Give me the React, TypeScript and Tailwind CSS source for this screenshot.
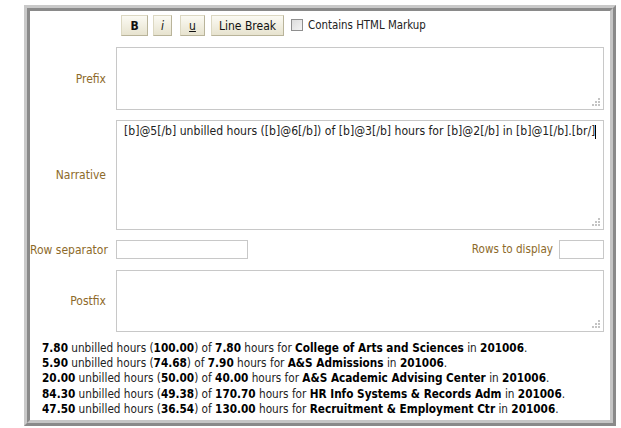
import React from "react";

const font = "font-['DejaVu_Sans_Condensed','DejaVu_Sans',sans-serif]";

const rows = [
  { a: "7.80", b: "100.00", c: "7.80", org: "College of Arts and Sciences" },
  { a: "5.90", b: "74.68", c: "7.90", org: "A&S Admissions" },
  { a: "20.00", b: "50.00", c: "40.00", org: "A&S Academic Advising Center" },
  { a: "84.30", b: "49.38", c: "170.70", org: "HR Info Systems & Records Adm" },
  { a: "47.50", b: "36.54", c: "130.00", org: "Recruitment & Employment Ctr" },
];

function Grip() {
  return (
    <svg className="absolute right-[3px] bottom-[3px]" width="9" height="9" viewBox="0 0 9 9">
      <g fill="#c4c4c4">
        <rect x="7" y="1" width="2" height="2" />
        <rect x="4" y="4" width="2" height="2" />
        <rect x="7" y="4" width="2" height="2" />
        <rect x="1" y="7" width="2" height="2" />
        <rect x="4" y="7" width="2" height="2" />
        <rect x="7" y="7" width="2" height="2" />
      </g>
    </svg>
  );
}

function Box({ h, children }: { h: string; children?: React.ReactNode }) {
  return (
    <div className={`relative ml-[10px] w-[488px] ${h} border border-[#c8c8c8] bg-white`}>
      {children}
      <Grip />
    </div>
  );
}

function Label({ children }: { children: React.ReactNode }) {
  return (
    <div className="w-[76px] shrink-0 whitespace-nowrap text-right text-[12px] text-[#8d6a2a]">{children}</div>
  );
}

function ToolButton({ children, className }: { children: React.ReactNode; className: string }) {
  return (
    <button
      className={`h-[21px] border border-t-[#dcd8c2] border-l-[#dcd8c2] border-r-[#b9b49a] border-b-[#b9b49a] bg-gradient-to-b from-[#fbfaf3] to-[#e7e3cf] text-[12px] text-[#111] ${className}`}
    >
      {children}
    </button>
  );
}

export default function App() {
  return (
    <div className={`w-[621px] h-[428px] bg-white pt-[5px] pl-[24px] ${font}`}>
      <div className="w-[592px] h-[421px] border-[3px] border-t-[#c9c9c9] border-l-[#c9c9c9] border-r-[#8a8a8a] border-b-[#8a8a8a]">
        <div className="h-full border-[3px] border-t-[#8a8a8a] border-l-[#8a8a8a] border-r-[#c6c6c6] border-b-[#c6c6c6] bg-white pt-[4px]">
          <div className="flex items-center h-[21px] pl-[91px]">
            <ToolButton className="w-[27px] font-bold">B</ToolButton>
            <ToolButton className="w-[19px] ml-[5px] italic">i</ToolButton>
            <ToolButton className="w-[25px] ml-[8px] underline">u</ToolButton>
            <ToolButton className="w-[73px] ml-[6px]">Line Break</ToolButton>
            <label className="flex items-center ml-[7px] text-[11.4px] text-[#222]">
              <span className="w-[12px] h-[12px] border border-[#8f8f8f] bg-gradient-to-br from-[#dcdcdc] to-[#f4f4f4]" />
              <span className="ml-[5px]">Contains HTML Markup</span>
            </label>
          </div>

          <div className="flex items-center mt-[11px]">
            <Label>Prefix</Label>
            <Box h="h-[63px]" />
          </div>

          <div className="flex items-center mt-[10px]">
            <Label>Narrative</Label>
            <Box h="h-[110px]">
              <div className="pl-[7px] pt-[3px] text-[12.1px] leading-[15px] text-[#222] whitespace-nowrap">
                [b]@5[/b] unbilled hours ([b]@6[/b]) of [b]@3[/b] hours for [b]@2[/b] in [b]@1[/b].[br/]
                <span className="inline-block align-middle w-[1px] h-[14px] bg-black" />
              </div>
            </Box>
          </div>

          <div className="flex items-center h-[19px] mt-[10px]">
            <Label>Row separator</Label>
            <div className="ml-[10px] w-[132px] h-[19px] border border-[#c8c8c8]" />
            <div className="flex-1 whitespace-nowrap text-right text-[11.6px] text-[#8d6a2a]">Rows to display</div>
            <div className="ml-[6px] mr-[6px] w-[45px] h-[19px] border border-[#c8c8c8]" />
          </div>

          <div className="flex items-center mt-[11px]">
            <Label>Postfix</Label>
            <Box h="h-[62px]" />
          </div>

          <div className="mt-[9px] pl-[12px] text-[11.7px] leading-[15.2px] text-[#222]">
            {rows.map((r) => (
              <div key={r.org} className="whitespace-nowrap">
                <b className="text-black">{r.a}</b> unbilled hours (<b className="text-black">{r.b}</b>) of{" "}
                <b className="text-black">{r.c}</b> hours for <b className="text-black">{r.org}</b> in{" "}
                <b className="text-black">201006</b>.
              </div>
            ))}
          </div>
        </div>
      </div>
    </div>
  );
}
